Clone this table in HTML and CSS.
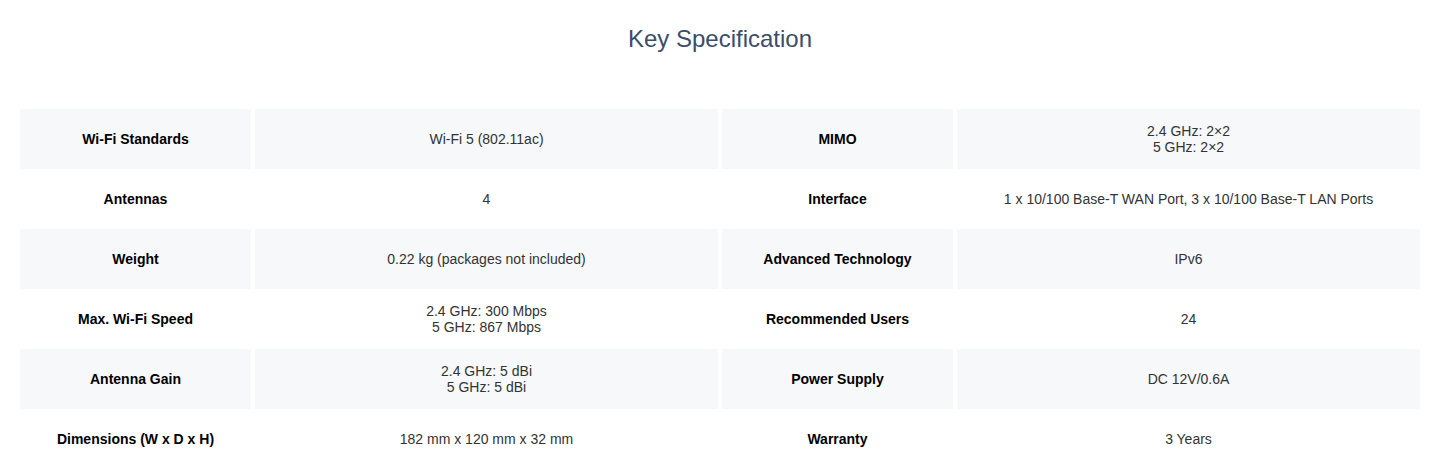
FILE: index.html
```html
<!DOCTYPE html>
<html lang="en">
<head>
<meta charset="utf-8">
<title>Key Specification</title>
<link rel="stylesheet" href="styles.css">
</head>
<body>
<section class="spec">
  <h2 class="spec-title">Key Specification</h2>
  <div class="spec-table">
    <div class="row">
      <div class="cell label">Wi-Fi Standards</div>
      <div class="cell value">Wi-Fi 5 (802.11ac)</div>
      <div class="cell label">MIMO</div>
      <div class="cell value">2.4 GHz: 2×2<br>5 GHz: 2×2</div>
    </div>
    <div class="row">
      <div class="cell label">Antennas</div>
      <div class="cell value">4</div>
      <div class="cell label">Interface</div>
      <div class="cell value">1 x 10/100 Base-T WAN Port, 3 x 10/100 Base-T LAN Ports</div>
    </div>
    <div class="row">
      <div class="cell label">Weight</div>
      <div class="cell value">0.22 kg (packages not included)</div>
      <div class="cell label">Advanced Technology</div>
      <div class="cell value">IPv6</div>
    </div>
    <div class="row">
      <div class="cell label">Max. Wi-Fi Speed</div>
      <div class="cell value">2.4 GHz: 300 Mbps<br>5 GHz: 867 Mbps</div>
      <div class="cell label">Recommended Users</div>
      <div class="cell value">24</div>
    </div>
    <div class="row">
      <div class="cell label">Antenna Gain</div>
      <div class="cell value">2.4 GHz: 5 dBi<br>5 GHz: 5 dBi</div>
      <div class="cell label">Power Supply</div>
      <div class="cell value">DC 12V/0.6A</div>
    </div>
    <div class="row">
      <div class="cell label">Dimensions (W x D x H)</div>
      <div class="cell value">182 mm x 120 mm x 32 mm</div>
      <div class="cell label">Warranty</div>
      <div class="cell value">3 Years</div>
    </div>
  </div>
</section>
</body>
</html>
```

FILE: styles.css
```css
html, body {
  margin: 0;
  padding: 0;
  background: #ffffff;
}

body {
  font-family: "Liberation Sans", Arial, sans-serif;
}

.spec {
  padding: 25px 20px 0;
}

.spec-title {
  margin: 0 0 56px;
  font-size: 24px;
  line-height: 28px;
  font-weight: normal;
  text-align: center;
  color: #3b4d6c;
}

.spec-table {
  display: flex;
  flex-direction: column;
}

.row {
  display: grid;
  grid-template-columns: 231px 463px 231px 463px;
  column-gap: 4px;
  height: 60px;
}

.row:nth-child(odd) .cell {
  background: #f7f8fa;
}

.cell {
  display: flex;
  align-items: center;
  justify-content: center;
  text-align: center;
  font-size: 14px;
  line-height: 16px;
}

.label {
  font-weight: bold;
  color: #000000;
}

.value {
  color: #333333;
}
```
